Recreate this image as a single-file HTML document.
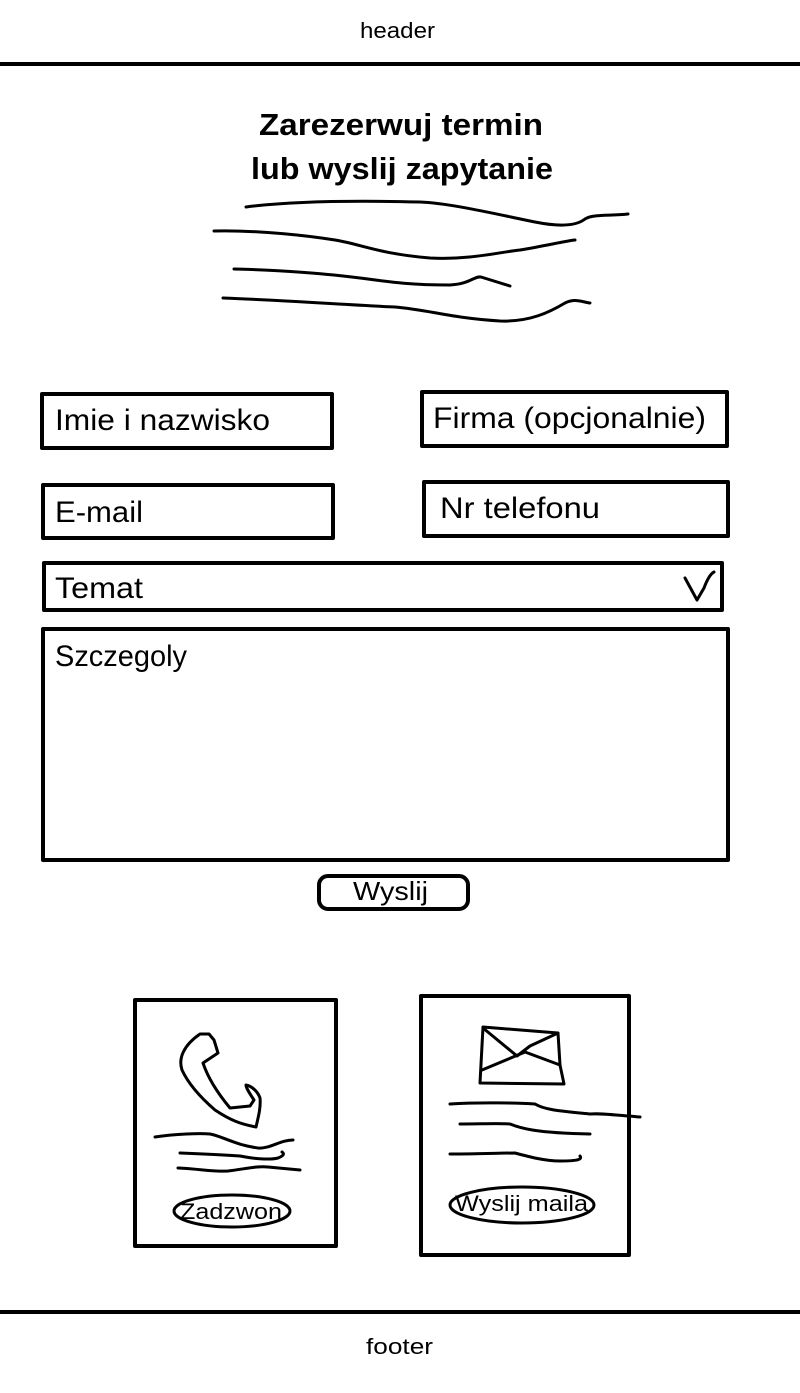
<!DOCTYPE html>
<html><head><meta charset="utf-8"><style>
html,body{margin:0;padding:0;background:#fff;width:800px;height:1393px;overflow:hidden}
svg{display:block}
text{font-family:"Liberation Sans",sans-serif;fill:#000}
</style></head><body>
<svg width="800" height="1393" viewBox="0 0 800 1393" xmlns="http://www.w3.org/2000/svg">
<g fill="none" stroke="#000" stroke-linecap="round" stroke-linejoin="round">
<line x1="0" y1="64" x2="800" y2="64" stroke-width="4"/>
<line x1="0" y1="1312" x2="800" y2="1312" stroke-width="4"/>
<g stroke-width="3">
<path d="M246,207 C300,200 380,201 420,202 C450,203 500,215 535,222 C555,226 575,227 585,219 C592,214 610,216 628,214"/>
<path d="M214,231 C260,230 310,236 335,240 C360,244 380,254 430,258 C470,260 500,252 520,250 C545,246 565,241 575,240"/>
<path d="M234,269 C280,270 330,274 360,278 C390,282 410,285 450,285 C470,284 474,276 481,277 L510,286"/>
<path d="M223,298 C280,300 350,305 395,307 C430,310 450,318 500,321 C530,322 550,312 565,303 C575,298 582,302 590,303"/>
</g>
<g stroke-width="4">
<rect x="42" y="394" width="290" height="54"/>
<rect x="422" y="392" width="305" height="54"/>
<rect x="43" y="485" width="290" height="53"/>
<rect x="424" y="482" width="304" height="54"/>
<rect x="44" y="563" width="678" height="47"/>
<rect x="43" y="629" width="685" height="231"/>
<rect x="319" y="876" width="149" height="33" rx="9"/>
<rect x="135" y="1000" width="201" height="246"/>
<rect x="421" y="996" width="208" height="259"/>
</g>
<path d="M685,578 L697,600 L704,588 C707,580 710,574 714,572" stroke-width="3"/>
<g stroke-width="3">
<path d="M209,1034 L214,1040 L218,1053 L203,1063 C207,1075 215,1090 230,1108 L250,1106 L254,1100 C250,1094 246,1088 246,1085 C252,1086 258,1092 260,1098 C261,1108 258,1118 256,1127 C240,1124 230,1120 215,1110 C200,1097 188,1083 182,1070 C178,1058 184,1045 200,1034 Z"/>
<path d="M155,1137 C175,1134 200,1133 210,1134 C222,1136 235,1145 258,1148 C270,1149 280,1140 293,1140"/>
<path d="M180,1153 C205,1154 225,1155 240,1156 C255,1159 270,1160 278,1158 C283,1156 285,1154 282,1152"/>
<path d="M178,1168 C200,1169 215,1172 228,1171 C245,1169 255,1166 268,1167 L300,1170"/>
<ellipse cx="232" cy="1211" rx="58" ry="16"/>
<path d="M483,1027 L558,1033 L560,1065 L564,1084 L480,1083 Z"/>
<path d="M483,1028 L517,1056 L530,1046 L558,1033"/>
<path d="M482,1070 L525,1052 L560,1065"/>
<path d="M450,1104 C480,1102 520,1103 535,1104 C545,1110 560,1111 590,1114 C600,1113 615,1115 640,1117"/>
<path d="M460,1124 C480,1124 500,1123 510,1124 C520,1128 535,1133 590,1134"/>
<path d="M450,1154 C480,1154 500,1153 515,1153 C530,1157 545,1161 560,1161 C580,1161 582,1159 580,1156"/>
<ellipse cx="522" cy="1205" rx="72" ry="18"/>
</g>
</g>
<g>
<text x="360" y="38" font-size="22" textLength="75" lengthAdjust="spacingAndGlyphs">header</text>
<text x="259" y="135" font-size="31" font-weight="bold" textLength="284" lengthAdjust="spacingAndGlyphs">Zarezerwuj termin</text>
<text x="251" y="179" font-size="31" font-weight="bold" textLength="302" lengthAdjust="spacingAndGlyphs">lub wyslij zapytanie</text>
<text x="55" y="430" font-size="30" textLength="215" lengthAdjust="spacingAndGlyphs">Imie i nazwisko</text>
<text x="433" y="428" font-size="30" textLength="273" lengthAdjust="spacingAndGlyphs">Firma (opcjonalnie)</text>
<text x="55" y="522" font-size="30" textLength="88" lengthAdjust="spacingAndGlyphs">E-mail</text>
<text x="440" y="518" font-size="30" textLength="160" lengthAdjust="spacingAndGlyphs">Nr telefonu</text>
<text x="55" y="598" font-size="30" textLength="88" lengthAdjust="spacingAndGlyphs">Temat</text>
<text x="55" y="666" font-size="30" textLength="132" lengthAdjust="spacingAndGlyphs">Szczegoly</text>
<text x="353" y="900" font-size="26" textLength="75" lengthAdjust="spacingAndGlyphs">Wyslij</text>
<text x="180" y="1219" font-size="22" textLength="102" lengthAdjust="spacingAndGlyphs">Zadzwon</text>
<text x="455" y="1211" font-size="22" textLength="133" lengthAdjust="spacingAndGlyphs">Wyslij maila</text>
<text x="366" y="1354" font-size="22" textLength="67" lengthAdjust="spacingAndGlyphs">footer</text>
</g>
</svg>
</body></html>
